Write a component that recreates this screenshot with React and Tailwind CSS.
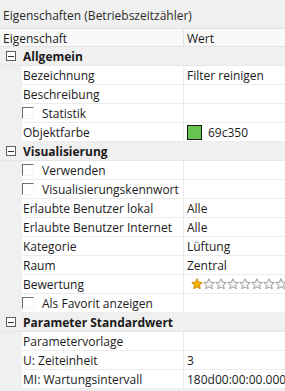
import React from "react";

const rows = [
  { type: "cat", label: "Allgemein" },
  { label: "Bezeichnung", value: "Filter reinigen" },
  { label: "Beschreibung", value: "" },
  { label: "Statistik", check: true },
  { label: "Objektfarbe", color: "#69c350", value: "69c350" },
  { type: "cat", label: "Visualisierung" },
  { label: "Verwenden", check: true },
  { label: "Visualisierungskennwort", check: true },
  { label: "Erlaubte Benutzer lokal", value: "Alle" },
  { label: "Erlaubte Benutzer Internet", value: "Alle" },
  { label: "Kategorie", value: "Lüftung" },
  { label: "Raum", value: "Zentral" },
  { label: "Bewertung", stars: 1 },
  { label: "Als Favorit anzeigen", check: true },
  { type: "cat", label: "Parameter Standardwert" },
  { label: "Parametervorlage", value: "" },
  { label: "U: Zeiteinheit", value: "3" },
  { label: "MI: Wartungsintervall", value: "180d00:00:00.000" },
];

const Star = ({ filled }) => (
  <svg width="12" height="12" viewBox="0 0 24 24" className="shrink-0">
    <path
      d="M12 1.5l3.1 6.9 7.4.7-5.6 5 1.7 7.4L12 17.7l-6.6 3.8 1.7-7.4-5.6-5 7.4-.7z"
      fill={filled ? "#f5b400" : "#f4f4f4"}
      stroke={filled ? "#c98a00" : "#9c9c9c"}
      strokeWidth="2"
      strokeLinejoin="round"
    />
  </svg>
);

const Checkbox = () => (
  <span className="w-[12px] h-[12px] shrink-0 border-t border-l border-t-[#6d6d6d] border-l-[#6d6d6d] border-b border-r border-b-[#f4f4f4] border-r-[#f4f4f4] bg-white" />
);

const MinusBox = () => (
  <span className="w-[10px] h-[10px] border border-[#5f5f5f] flex items-center justify-center bg-white">
    <span className="w-[6px] h-px bg-[#333]" />
  </span>
);

const Row = ({ row }) => {
  if (row.type === "cat") {
    return (
      <div className="flex h-[19px] items-center bg-[#f0f0f0] border-b border-[#e6e6e6]">
        <div className="w-[22px] flex justify-center">
          <MinusBox />
        </div>
        <span className="font-bold pl-[1px] pt-[2px]">{row.label}</span>
      </div>
    );
  }
  return (
    <div className="flex h-[19px]">
      <div className="w-[22px] bg-[#f0f0f0]" />
      <div className="w-[162px] flex items-center border-b border-r border-[#ececec] bg-white">
        {row.check ? (
          <>
            <Checkbox />
            <span className="pl-[8px] pt-[2px]">{row.label}</span>
          </>
        ) : (
          <span className="pl-[1px] pt-[2px]">{row.label}</span>
        )}
      </div>
      <div className="flex-1 flex items-center border-b border-[#ececec] bg-white pl-[3px] overflow-hidden">
        {row.color && (
          <span
            className="w-[15px] h-[15px] border border-[#1a1a1a] mr-[6px] shrink-0"
            style={{ backgroundColor: row.color }}
          />
        )}
        {row.stars !== undefined && (
          <div className="flex gap-[0px] pl-[4px]">
            {[0, 1, 2, 3, 4, 5, 6, 7, 8].map((i) => (
              <Star key={i} filled={i < row.stars} />
            ))}
          </div>
        )}
        {row.value && <span className="pt-[2px]">{row.value}</span>}
      </div>
    </div>
  );
};

export default function App() {
  return (
    <div
      className="w-[285px] h-[391px] overflow-hidden bg-[#f0f0f0] text-[12px] text-[#1b1b1b] leading-none"
      style={{ fontFamily: '"Open Sans", "Noto Sans", sans-serif' }}
    >
      <div className="h-[28px] flex items-center pl-[3px] pt-[3px] text-[#2a2a2a]">
        Eigenschaften (Betriebszeitzähler)
      </div>
      <div className="h-[19px] flex bg-[#f8f8f8] border-t border-b border-[#e2e2e2]">
        <div className="w-[184px] flex items-center pl-[3px] pt-[2px] border-r border-[#e2e2e2]">
          Eigenschaft
        </div>
        <div className="flex-1 flex items-center pl-[3px] pt-[2px]">Wert</div>
      </div>
      {rows.map((r, i) => (
        <Row key={i} row={r} />
      ))}
    </div>
  );
}
